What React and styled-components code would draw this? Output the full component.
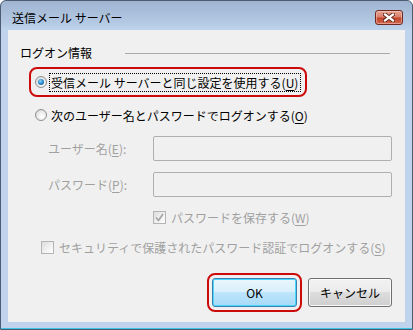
import React from "react";
import styled, { createGlobalStyle } from "styled-components";

const GlobalStyle = createGlobalStyle`
  body {
    margin: 0;
    background: #ffffff;
    font-family: "Noto Sans CJK JP", "Noto Sans", sans-serif;
    font-size: 12px;
  }
`;

const Window = styled.div`
  width: 413px;
  height: 330px;
  box-sizing: border-box;
  border: 1px solid #4c5d73;
  border-radius: 6px 6px 0 0;
  background: linear-gradient(to bottom, #9fb4d0 0px, #b4c9e3 22px, #bfd4ec 29px, #bfd4ec 100%);
  box-shadow: inset 0 -1px 0 #3ec3e2;
  display: flex;
  flex-direction: column;
  overflow: hidden;
`;

const TitleBar = styled.div`
  height: 29px;
  flex-shrink: 0;
  display: flex;
  align-items: flex-start;
  justify-content: space-between;
  padding: 0 9px 0 11px;
`;

const Title = styled.div`
  margin-top: 9px;
  line-height: 16px;
  color: #000;
`;

const CloseButton = styled.div`
  margin-top: 9px;
  width: 28px;
  height: 15px;
  box-sizing: border-box;
  border: 1px solid #6e2a22;
  border-radius: 3px;
  background: linear-gradient(to bottom, #e6a595 0%, #d98069 45%, #c4432b 55%, #cf6a50 100%);
  box-shadow: inset 0 0 0 1px rgba(255, 220, 210, 0.45);
  display: flex;
  align-items: center;
  justify-content: center;
`;

const Client = styled.div`
  flex: 1;
  margin: 0 7px 7px;
  background: #f0f0f0;
  display: flex;
  flex-direction: column;
`;

const GroupHeader = styled.div`
  display: flex;
  align-items: center;
  margin: 15px 15px 0 12px;
  height: 16px;
  line-height: 16px;
  color: #000;
`;

const GroupLine = styled.div`
  flex: 1;
  height: 1px;
  margin-left: 33px;
  background: #a9a9a9;
`;

const Highlight = styled.div`
  box-sizing: border-box;
  border: 2px solid #cc0a0a;
  border-radius: 8px;
`;

const RadioHighlight = styled(Highlight)`
  margin: 6px 0 0 21px;
  width: 278px;
  height: 30px;
  display: flex;
  align-items: center;
  padding-left: 4px;
`;

const Row = styled.div`
  display: flex;
  align-items: center;
  margin-top: ${(p) => p.$top}px;
  margin-left: ${(p) => p.$left}px;
  height: ${(p) => p.$height || 16}px;
`;

const Radio = styled.span`
  width: 12px;
  height: 12px;
  box-sizing: border-box;
  border-radius: 50%;
  border: 1px solid #8e8f8f;
  background: radial-gradient(circle at 60% 65%, #ffffff 0%, #f0f0f0 40%, #cfcfcf 100%);
  display: flex;
  align-items: center;
  justify-content: center;
  flex-shrink: 0;
  margin-right: 2px;
  &::after {
    content: "";
    display: ${(p) => (p.$checked ? "block" : "none")};
    width: 6px;
    height: 6px;
    border-radius: 50%;
    background: radial-gradient(circle at 40% 35%, #8fd8fa 0%, #2f8fd0 45%, #0d4c84 100%);
  }
`;

const OptionText = styled.span`
  line-height: 17px;
  padding: 0 2px 0 1px;
  border: 1px ${(p) => (p.$focus ? "dotted #000" : "solid transparent")};
  color: ${(p) => (p.$disabled ? "#a0a0a0" : "#000")};
  white-space: nowrap;
`;

const Key = styled.span`
  text-decoration: underline;
  text-underline-offset: 2px;
`;

const FieldLabel = styled.span`
  width: 105px;
  color: #a0a0a0;
  white-space: nowrap;
`;

const Input = styled.div`
  width: 239px;
  height: 25px;
  box-sizing: border-box;
  border: 1px solid #afafaf;
  border-radius: 2px;
  background: #f0f0f0;
`;

const CheckBox = styled.span`
  width: 13px;
  height: 13px;
  box-sizing: border-box;
  border: 1px solid #b4b4b4;
  background: linear-gradient(135deg, #dcdcdc 0%, #f2f2f2 60%, #ffffff 100%);
  display: flex;
  align-items: center;
  justify-content: center;
  flex-shrink: 0;
  margin-right: 3px;
`;

const ButtonRow = styled.div`
  display: flex;
  align-items: center;
  justify-content: flex-end;
  margin-top: 18px;
  padding-right: 13px;
  gap: 6px;
`;

const ButtonHighlight = styled(Highlight)`
  padding: 3px;
  display: flex;
`;

const Button = styled.div`
  width: ${(p) => p.$width}px;
  height: 29px;
  box-sizing: border-box;
  border-radius: 3px;
  border: 1px solid ${(p) => (p.$primary ? "#3c7fb1" : "#707070")};
  background: ${(p) =>
    p.$primary
      ? "linear-gradient(to bottom, #eaf6fd 0%, #d9f0fc 49%, #bee6fd 50%, #a7d9f5 100%)"
      : "linear-gradient(to bottom, #f2f2f2 0%, #ebebeb 49%, #dddddd 50%, #cfcfcf 100%)"};
  box-shadow: inset 0 0 0 1px ${(p) => (p.$primary ? "#48d8fb" : "rgba(255,255,255,0.8)")};
  display: flex;
  align-items: center;
  justify-content: center;
  color: #000;
`;

const CloseIcon = () => (
  <svg width="12" height="9" viewBox="0 0 12 9">
    <path d="M2 1.5 L10 7.5 M10 1.5 L2 7.5" stroke="#5a1d16" strokeWidth="4" strokeLinecap="square" />
    <path d="M2 1.5 L10 7.5 M10 1.5 L2 7.5" stroke="#ffffff" strokeWidth="2.2" strokeLinecap="square" />
  </svg>
);

const CheckMark = () => (
  <svg width="9" height="9" viewBox="0 0 9 9">
    <path d="M1 4.5 L3.5 7.5 L8 1" fill="none" stroke="#a3a3a3" strokeWidth="1.6" />
  </svg>
);

export default function App() {
  return (
    <>
      <GlobalStyle />
      <Window>
        <TitleBar>
          <Title>送信メール サーバー</Title>
          <CloseButton>
            <CloseIcon />
          </CloseButton>
        </TitleBar>
        <Client>
          <GroupHeader>
            ログオン情報
            <GroupLine />
          </GroupHeader>
          <RadioHighlight>
            <Radio $checked />
            <OptionText $focus>
              受信メール サーバーと同じ設定を使用する(<Key>U</Key>)
            </OptionText>
          </RadioHighlight>
          <Row $top={9} $left={27} $height={18}>
            <Radio />
            <OptionText>
              次のユーザー名とパスワードでログオンする(<Key>O</Key>)
            </OptionText>
          </Row>
          <Row $top={12} $left={40} $height={25}>
            <FieldLabel>
              ユーザー名(<Key>E</Key>):
            </FieldLabel>
            <Input />
          </Row>
          <Row $top={11} $left={40} $height={25}>
            <FieldLabel>
              パスワード(<Key>P</Key>):
            </FieldLabel>
            <Input />
          </Row>
          <Row $top={12} $left={145}>
            <CheckBox>
              <CheckMark />
            </CheckBox>
            <OptionText $disabled>
              パスワードを保存する(<Key>W</Key>)
            </OptionText>
          </Row>
          <Row $top={14} $left={33}>
            <CheckBox />
            <OptionText $disabled>
              セキュリティで保護されたパスワード認証でログオンする(<Key>S</Key>)
            </OptionText>
          </Row>
          <ButtonRow>
            <ButtonHighlight>
              <Button $primary $width={85}>OK</Button>
            </ButtonHighlight>
            <Button $width={84}>キャンセル</Button>
          </ButtonRow>
        </Client>
      </Window>
    </>
  );
}
